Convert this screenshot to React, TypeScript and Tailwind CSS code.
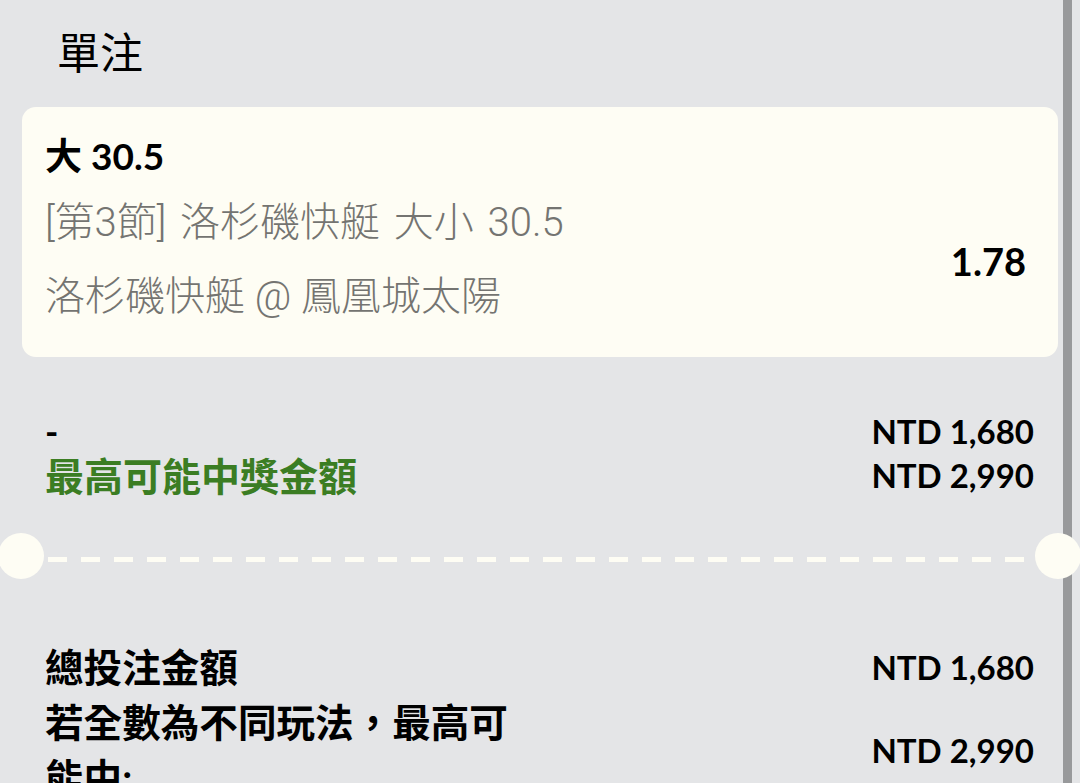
import React from "react";

export default function App() {
  return (
    <div className="relative w-[1080px] h-[783px] overflow-hidden bg-[#e4e5e7] text-black font-['Lato','Noto_Sans_CJK_TC',sans-serif]">
      <div className="pl-[57px] pt-[22px] h-[107px] text-[43px] leading-[62px] font-normal">單注</div>

      <div className="mx-[22px] h-[250px] rounded-[14px] bg-[#fefdf4] pl-[23px] pr-[32px] flex items-center justify-between">
        <div className="flex flex-col">
          <div className="text-[37px] font-bold leading-[50px] mt-[-12px]">大 30.5</div>
          <div className="text-[40px] font-light font-['Roboto','Noto_Sans_CJK_TC',sans-serif] text-[#747471] leading-[50px] mt-[17px] [word-spacing:4px]">[第3節] 洛杉磯快艇 大小 30.5</div>
          <div className="text-[40px] font-light font-['Roboto','Noto_Sans_CJK_TC',sans-serif] text-[#747471] leading-[50px] mt-[24px]">洛杉磯快艇 @ 鳳凰城太陽</div>
        </div>
        <div className="text-[38px] font-bold leading-[50px] mt-[58px]">1.78</div>
      </div>

      <div className="pl-[45px] pr-[46px] pt-[52px] flex justify-between">
        <div className="flex flex-col">
          <div className="text-[36px] font-bold leading-[44px]">-</div>
          <div className="text-[39px] font-bold leading-[46px] text-[#3b7d23]">最高可能中獎金額</div>
        </div>
        <div className="flex flex-col items-end">
          <div className="text-[33px] font-bold leading-[44px]">NTD 1,680</div>
          <div className="text-[33px] font-bold leading-[44px]">NTD 2,990</div>
        </div>
      </div>

      <div className="relative h-[46px] mt-[34px] flex items-center">
        <div className="absolute left-[-2px] top-0 w-[46px] h-[46px] rounded-full bg-[#fefdf4]" />
        <div className="absolute right-[-1px] top-0 w-[46px] h-[46px] rounded-full bg-[#fefdf4] z-10" />
        <div className="ml-[48px] mr-[50px] flex-1 h-[5px] mt-[6px] bg-[repeating-linear-gradient(90deg,#fefdf4_0px,#fefdf4_19px,transparent_19px,transparent_33px)]" />
      </div>

      <div className="pl-[45px] pr-[46px] pt-[61px] flex flex-col">
        <div className="flex justify-between items-center">
          <div className="text-[38.6px] font-bold leading-[55px]">總投注金額</div>
          <div className="text-[33px] font-bold leading-[55px]">NTD 1,680</div>
        </div>
        <div className="flex justify-between items-center">
          <div className="w-[490px] text-[38.6px] font-bold leading-[55px]">若全數為不同玩法，最高可能中:</div>
          <div className="text-[33px] font-bold leading-[55px]">NTD 2,990</div>
        </div>
      </div>

      <div className="absolute top-0 left-[1063px] w-[9px] h-full bg-[#98999b]" />
    </div>
  );
}
